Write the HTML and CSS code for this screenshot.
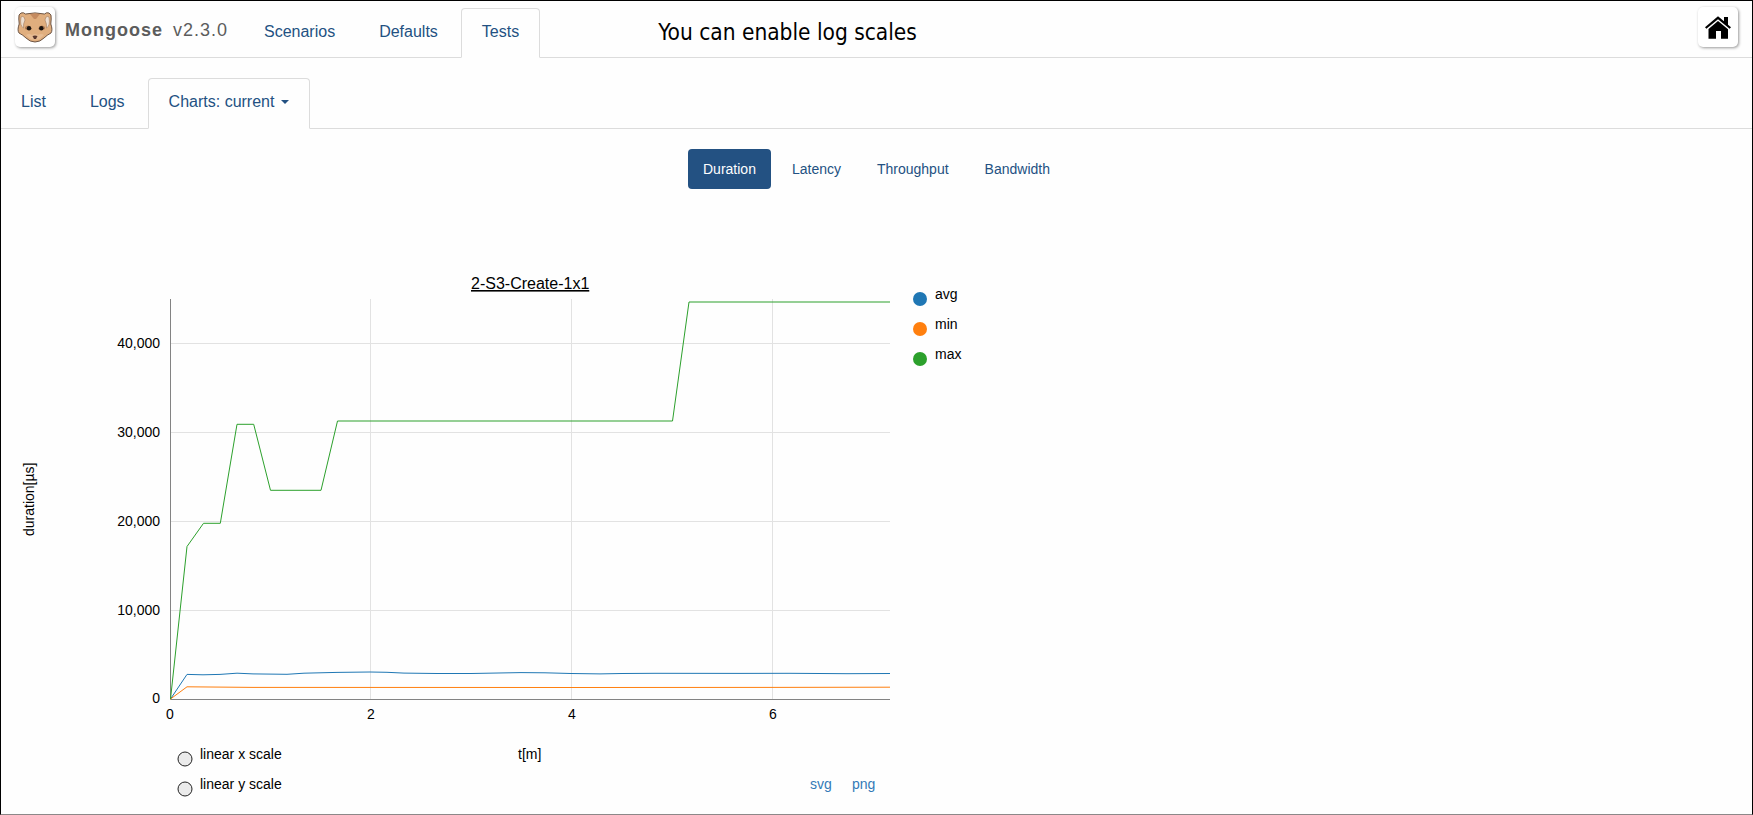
FILE: index.html
```html
<!DOCTYPE html>
<html lang="en">
<head>
<meta charset="utf-8">
<title>Mongoose</title>
<link rel="stylesheet" href="styles.css">
</head>
<body>
<div class="page">
  <header class="header">
    <a class="icon-button logo">
      <svg width="36" height="32" viewBox="0 0 36 32">
        <path d="M4 2 Q1.200 3 1.8 8 L2.2 13 Q0 19 2 22 Q6 24 9 27 Q13 31 18 31 Q23 31 27 27 Q30 24 34 22 Q36 19 33.8 13 L34.2 8 Q34.8 3 32 2 Q29.500 1 27.5 3 Q18 .8 8.5 3 Q6.500 1 4 2Z" fill="#e0ae7e" stroke="#5f4739" stroke-width=".9"/>
        <path d="M4 6 Q7 4 8 9 Q6 13 6.500 17 Q2.500 15 4 6ZM32 6 Q29 4 28 9 Q30 13 29.500 17 Q33.500 15 32 6Z" fill="#eedfd1" stroke="#a07c61" stroke-width=".6"/>
        <path d="M13 3 Q18 2 23 3 L19 8 L17 8Z" fill="#c58b60"/>
        <path d="M8 16 Q12 12 15 18 Q11 20 8 18ZM28 16 Q24 12 21 18 Q25 20 28 18Z" fill="#b07d56"/>
        <path d="M9 24 Q12 22 15 24 Q18 22 21 24 Q24 22 27 24 L22 28.500 L14 28.500Z" fill="#e8bd94"/>
        <circle cx="12" cy="17.300" r="2.200" fill="#19130f"/><circle cx="24.300" cy="17.300" r="2.200" fill="#19130f"/>
        <path d="M15.500 25 Q18 24 20.500 25 L19 28 L17 28Z" fill="#59372d"/>
      </svg>
    </a>
    <div class="brand"><b>Mongoose</b><span>v2.3.0</span></div>
    <nav class="tabs main-tabs">
      <a class="tab">Scenarios</a><a class="tab">Defaults</a><a class="tab active">Tests</a>
    </nav>
    <div class="caption">You can enable log scales</div>
    <a class="icon-button home">
      <svg width="26" height="23" viewBox="0 0 26 23">
        <path d="M0 11.2 13 .3 19 5.3V1H23V8.7L26 11.2 24.6 12.8 13 3.2 1.4 12.8Z"/>
        <path d="M13 5 23 13.2V22.7H16V15H11V22.7H3.5V12.9Z"/>
      </svg>
    </a>
  </header>
  <nav class="tabs sub-tabs">
    <a class="tab">List</a><a class="tab">Logs</a><a class="tab active">Charts: current<i class="caret"></i></a>
  </nav>
  <nav class="pills">
    <a class="pill active">Duration</a><a class="pill">Latency</a><a class="pill">Throughput</a><a class="pill">Bandwidth</a>
  </nav>
  <svg class="chart" width="1000" height="600" viewBox="0 210 1000 600">
    <g class="grid">
      <path d="M370.5 299V699M571.5 299V699M772.5 299V699M171 343.5H890M171 432.5H890M171 521.5H890M171 610.5H890"/>
    </g>
    <path class="axis" d="M170.5 299V699.5H890"/>
    <path class="line avg" d="M170.5 699 187 674.4 203 674.8 220 674.4 237 673.2 253 673.9 287 674.3 304 673.2 337 672.4 370 672 387 672.3 404 673.1 437 673.5 471 673.5 521 672.6 545 672.8 571 673.5 600 673.9 622 673.5 655 673.3 740 673.4 790 673.3 847 673.7 890 673.5"/>
    <path class="line min" d="M170.5 699 187 686.8 220 687.1 253 687.4 571 687.5 770 687.4 890 687.2"/>
    <path class="line max" d="M170.5 699 187 546.5 203.5 523.3H220.3L237 424.3H253.7L270.5 490.3H321L337.5 421H672.5L689 302H890"/>
    <text class="title" x="471" y="289">2-S3-Create-1x1</text>
    <g class="end">
      <text x="160" y="348">40,000</text><text x="160" y="437">30,000</text><text x="160" y="526">20,000</text><text x="160" y="615">10,000</text><text x="160" y="703">0</text>
    </g>
    <g class="mid">
      <text x="170" y="719">0</text><text x="371" y="719">2</text><text x="572" y="719">4</text><text x="773" y="719">6</text>
    </g>
    <text transform="translate(34 536) rotate(-90)">duration[µs]</text>
    <text x="518" y="759">t[m]</text>
    <circle cx="920" cy="299" r="7" fill="#1f77b4"/><text x="935" y="299">avg</text>
    <circle cx="920" cy="329" r="7" fill="#ff7f0e"/><text x="935" y="329">min</text>
    <circle cx="920" cy="359" r="7" fill="#2ca02c"/><text x="935" y="359">max</text>
    <circle class="toggle" cx="185" cy="759" r="7"/><text x="200" y="759">linear x scale</text>
    <circle class="toggle" cx="185" cy="789" r="7"/><text x="200" y="789">linear y scale</text>
    <text class="link" x="810" y="789">svg</text><text class="link" x="852" y="789">png</text>
  </svg>
</div>
</body>
</html>
```
FILE: styles.css
```css
* { box-sizing: border-box; }
body { margin: 0; background: #fefefe; font-family: "Liberation Sans", Arial, sans-serif; }
.page {
  height: 815px;
  overflow: hidden;
  border: 1px solid #000;
  border-bottom-color: #8c8888;
  display: flex;
  flex-direction: column;
}
.header {
  height: 57px;
  flex: none;
  display: flex;
  align-items: flex-start;
  padding: 6px 14px 0 14px;
  border-bottom: 1px solid #dcdcdc;
}
.icon-button {
  width: 40px;
  height: 40px;
  flex: none;
  display: flex;
  align-items: center;
  justify-content: center;
  border-radius: 5px;
  background: #fff;
  box-shadow: 1px 1px 3px rgba(0, 0, 0, .4);
}
.brand {
  display: flex;
  gap: 10px;
  width: 188px;
  padding: 13px 0 0 10px;
  font-size: 18px;
  line-height: 20px;
  letter-spacing: 1px;
  color: #5c5c5c;
}
.tabs { display: flex; gap: 2px; color: #235182; font-size: 16px; line-height: 24px; }
.tab { padding: 0 20px; border: 1px solid transparent; white-space: nowrap; }
.tab.active {
  border-color: #dcdcdc;
  border-bottom-color: #fefefe;
  border-radius: 4px 4px 0 0;
  background: #fefefe;
}
.main-tabs { margin-top: 1px; }
.main-tabs .tab { height: 50px; padding-top: 11px; }
.caption {
  margin-left: 118px;
  padding-top: 10px;
  font-family: "DejaVu Sans Condensed", "DejaVu Sans", sans-serif;
  font-stretch: condensed;
  font-size: 22.5px;
  line-height: 30px;
  letter-spacing: -.01px;
  white-space: nowrap;
  color: #000;
}
.home { margin-left: auto; }
.sub-tabs { flex: none; height: 71px; padding-top: 20px; margin-left: -1px; border-bottom: 1px solid #dcdcdc; }
.sub-tabs .tab { height: 51px; padding-top: 11px; }
.caret {
  display: inline-block;
  margin-left: 7px;
  vertical-align: 3px;
  border-top: 4px solid #235182;
  border-left: 4px solid transparent;
  border-right: 4px solid transparent;
}
.pills {
  flex: none;
  display: flex;
  gap: 6px;
  padding: 20px 0 21px 687px;
  font-size: 14px;
  line-height: 40px;
  color: #235182;
}
.pill { padding: 0 15px; border-radius: 4px; }
.pill.active { background: #235182; color: #fefefe; }
.chart { flex: none; margin-left: -1px; font-size: 14px; fill: #000; }
.grid path { stroke: #e2e2e2; fill: none; }
.axis { stroke: #838383; fill: none; }
.line { fill: none; stroke-width: 1; }
.avg { stroke: #1f77b4; }
.min { stroke: #ff7f0e; }
.max { stroke: #2ca02c; }
.title { font-size: 16px; text-decoration: underline; text-decoration-thickness: 1px; }
.end { text-anchor: end; }
.mid { text-anchor: middle; }
.toggle { fill: #ebebeb; stroke: #222; }
.link { fill: #337ab7; }
```
